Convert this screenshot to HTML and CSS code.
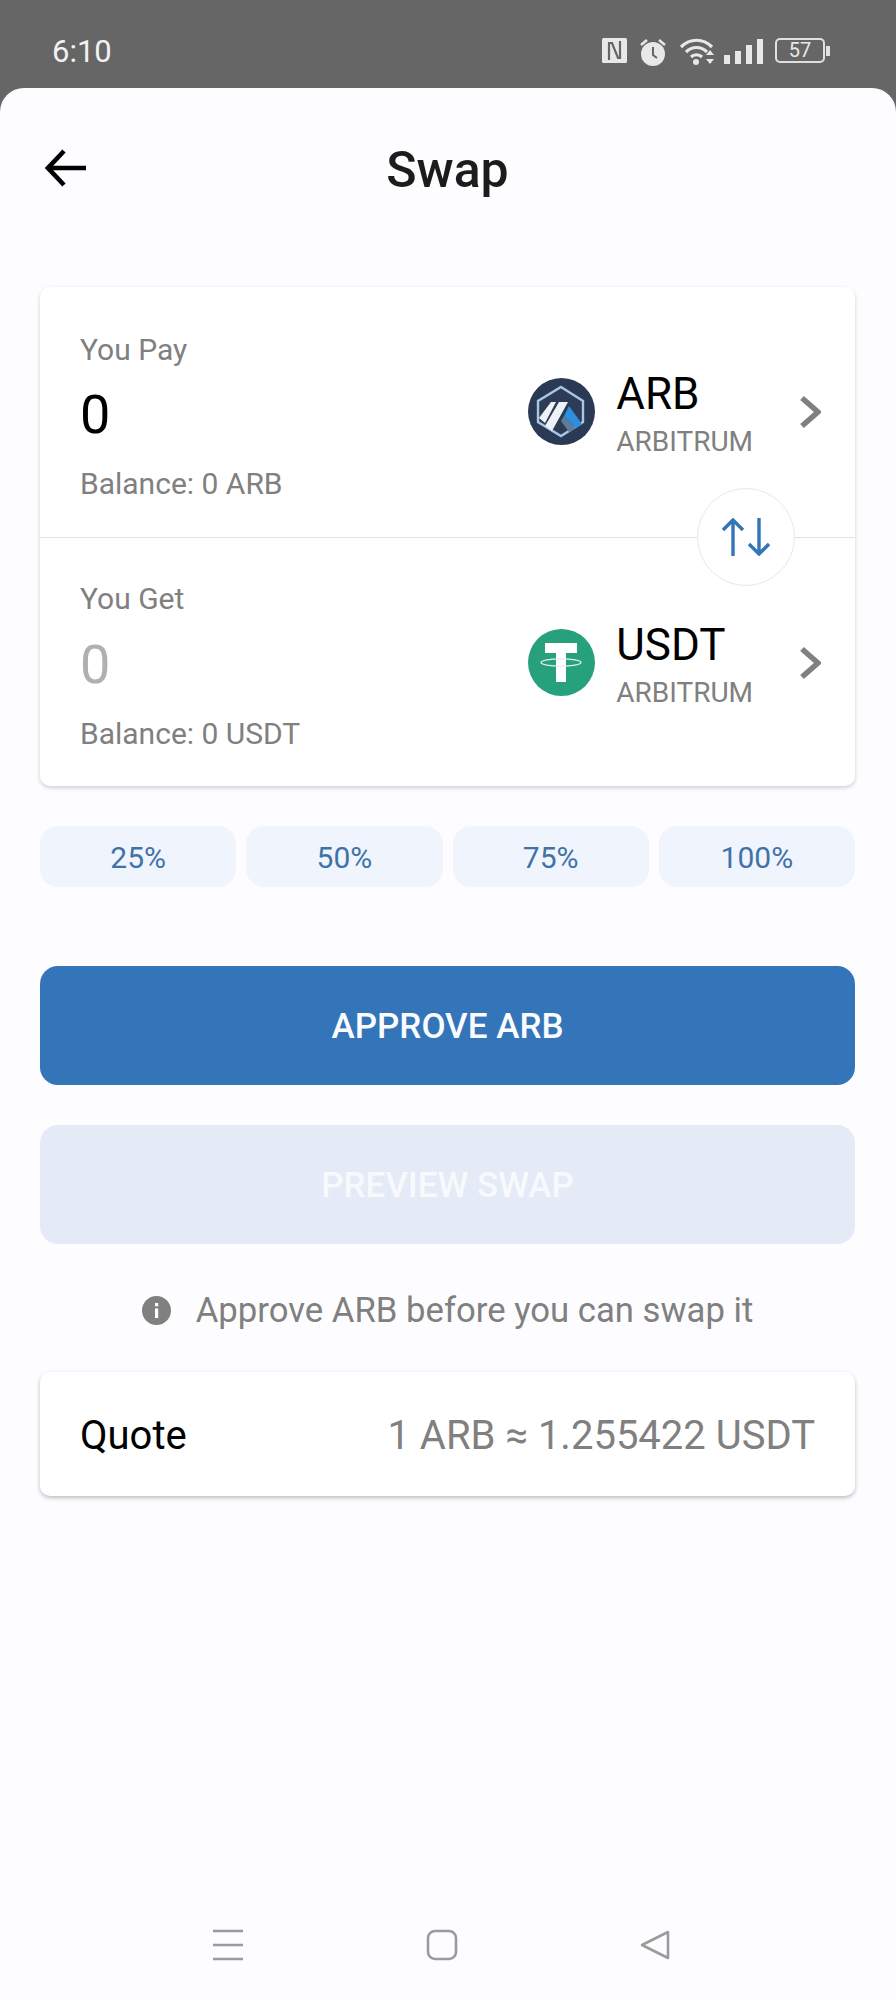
FILE: index.html
```html
<!DOCTYPE html>
<html lang="en">

<head>
  <meta charset="UTF-8">
  <meta name="viewport" content="width=device-width, initial-scale=1.0">
  <title>Swap</title>
  <link rel="stylesheet" href="styles.css">
</head>

<body>
  <div class="status">
    <span class="status__time">6:10</span>
    <div class="status__icons">
      <svg width="25" height="25" viewBox="0 0 25 25"><rect width="25" height="25" rx="1.500" fill="#e8e8e8"/><path d="M7 22V5h3l6 15h2V3" fill="none" stroke="#666" stroke-width="2.200"/></svg>
      <svg width="28" height="29" viewBox="0 0 28 29"><circle cx="14" cy="16" r="12" fill="#e8e8e8"/><path d="M14 9v8l4 3" fill="none" stroke="#666" stroke-width="2"/><path d="M2 7l6-5M26 7l-6-5" stroke="#e8e8e8" stroke-width="2.500"/></svg>
      <svg width="36" height="28" viewBox="0 0 36 28"><g fill="none" stroke="#e8e8e8" stroke-width="3.200"><path d="M2 9C11 0 24 0 33 9"/><path d="M7 14c6-6 15-6 21 0"/><path d="M12 19c3-3 8-3 11 0"/></g><circle cx="17" cy="24" r="3" fill="#e8e8e8"/><path d="M27 17l4-5 4 5zM27 21l4 5 4-5z" fill="#e8e8e8"/></svg>
      <div class="signal"><i class="s1"></i><i class="s2"></i><i class="s3"></i><i class="s4"></i></div>
      <div class="battery"><span class="battery__num">57</span></div>
    </div>
  </div>

  <div class="sheet">
    <div class="header">
      <svg class="header__back" width="41" height="38" viewBox="0 0 41 38"><path d="M19 2L3 19l16 17M3 19h38" fill="none" stroke="#000" stroke-width="4.600"/></svg>
      <h1 class="header__title">Swap</h1>
    </div>

    <div class="swap-card">
      <div class="swap-row">
        <div class="swap-row__left">
          <p class="swap-row__label">You Pay</p>
          <p class="swap-row__amount">0</p>
          <p class="swap-row__label swap-row__balance">Balance: 0 ARB</p>
        </div>
        <div class="token">
          <svg class="token__logo" viewBox="0 0 67 67">
            <circle cx="33.500" cy="33.500" r="33.500" fill="#2a3a54"/>
            <path d="M33 9l22 14v21L33 58 10 44V23z" fill="#2d3c55" stroke="#a9c6e4" stroke-width="2.400"/>
            <path d="M23 24h5L17 45l-6-5zM31 24h9L24 53l-7-5z" fill="#eef1f5"/>
            <path d="M36 38l-3 5 8 11 7-4z" fill="#5d7c9c"/>
            <path d="M41 28l13 18-6 4-12-12z" fill="#2d8fde"/>
          </svg>
          <div class="token__text">
            <span class="token__name">ARB</span>
            <span class="token__chain">ARBITRUM</span>
          </div>
          <svg class="token__arrow" width="22" height="34" viewBox="0 0 22 34"><path d="M3 3l16 14L3 31" fill="none" stroke="#808080" stroke-width="5.600"/></svg>
        </div>
      </div>

      <div class="swap-row swap-row--get">
        <div class="swap-row__left">
          <p class="swap-row__label">You Get</p>
          <p class="swap-row__amount swap-row__amount--empty">0</p>
          <p class="swap-row__label swap-row__balance">Balance: 0 USDT</p>
        </div>
        <div class="token token--get">
          <svg class="token__logo" viewBox="0 0 67 67">
            <circle cx="33.500" cy="33.500" r="33.500" fill="#26a17b"/>
            <path d="M17 14h32v10H38v29H28V24H17z" fill="#fff"/>
            <ellipse cx="33" cy="33.500" rx="20" ry="3.700" fill="none" stroke="#dff3ec" stroke-width="1.300"/>
          </svg>
          <div class="token__text">
            <span class="token__name">USDT</span>
            <span class="token__chain">ARBITRUM</span>
          </div>
          <svg class="token__arrow" width="22" height="34" viewBox="0 0 22 34"><path d="M3 3l16 14L3 31" fill="none" stroke="#808080" stroke-width="5.600"/></svg>
        </div>
      </div>

      <div class="swap-toggle">
        <svg width="48" height="38" viewBox="0 0 48 38"><path d="M11 38V2M1 12L11 2l10 10M37 0v36M27 26l10 10 10-10" fill="none" stroke="#3474b9" stroke-width="3.400"/></svg>
      </div>
    </div>

    <div class="percents">
      <button>25%</button>
      <button>50%</button>
      <button>75%</button>
      <button>100%</button>
    </div>

    <button class="btn btn--primary">APPROVE ARB</button>
    <button class="btn btn--disabled">PREVIEW SWAP</button>

    <div class="notice">
      <svg width="29" height="29" viewBox="0 0 29 29"><circle cx="14.500" cy="14.500" r="14.500" fill="#808080"/><path d="M13 12.500h3.200V22H13zM13 7h3.200v3.200H13z" fill="#fff"/></svg>
      <span>Approve ARB before you can swap it</span>
    </div>

    <div class="quote">
      <span class="quote__label">Quote</span>
      <span class="quote__value">1 ARB ≈ 1.255422 USDT</span>
    </div>

    <div class="nav">
      <svg width="32" height="32" viewBox="0 0 32 32"><path d="M1 2h30M1 16h30M1 30h30" stroke="#9b9b9b" stroke-width="2.400"/></svg>
      <svg width="32" height="32" viewBox="0 0 32 32"><rect x="2" y="2" width="28" height="28" rx="7" fill="none" stroke="#9b9b9b" stroke-width="2.600"/></svg>
      <svg width="32" height="32" viewBox="0 0 32 32"><path d="M29 3v26L3 16z" fill="none" stroke="#9b9b9b" stroke-width="2.600" stroke-linejoin="round"/></svg>
    </div>
  </div>
</body>

</html>
```

FILE: styles.css
```css
* {
  box-sizing: border-box;
}

html,
body {
  height: 100%;
}

body {
  margin: 0;
  background-color: #666;
  font-family: Roboto, "Liberation Sans", sans-serif;
  color: #000;
}

p,
h1 {
  margin: 0;
}

.status {
  display: flex;
  height: 88px;
  padding: 38px 71px 0 52px;
  justify-content: space-between;
  align-items: flex-start;
}

.status__time {
  color: #f2f2f2;
  font-size: 31px;
  line-height: 28px;
}

.status__icons {
  display: flex;
  align-items: flex-start;
  gap: 12px;
}

.signal {
  display: flex;
  align-items: flex-end;
  gap: 5px;
  height: 26px;
  margin-left: -3px;
}

.signal i {
  display: block;
  width: 6px;
  background-color: #e8e8e8;
}

.signal .s1 { height: 9px; }
.signal .s2 { height: 13px; }
.signal .s3 { height: 19px; }
.signal .s4 { height: 25px; }

.battery {
  position: relative;
  width: 50px;
  height: 25px;
  border: 2px solid #e0e0e0;
  border-radius: 5px;
  text-align: center;
}

.battery::after {
  content: "";
  position: absolute;
  right: -7px;
  top: 6px;
  width: 4px;
  height: 10px;
  background-color: #e0e0e0;
}

.battery__num {
  display: block;
  color: #e8e8e8;
  font-size: 20px;
  line-height: 21px;
}

.sheet {
  display: flex;
  flex-direction: column;
  height: 1911px;
  padding: 0 41px 0 40px;
  background-color: #fdfdff;
  border-radius: 24px 24px 0 0;
}

.header {
  position: relative;
  display: flex;
  height: 199px;
  padding-top: 50px;
  justify-content: center;
}

.header__back {
  position: absolute;
  left: 5px;
  top: 61px;
}

.header__title {
  font-size: 50px;
  font-weight: 500;
  line-height: 64px;
  color: #1c1c1c;
}

.swap-card {
  position: relative;
  background-color: #fff;
  border-radius: 10px;
  box-shadow: 0 2px 4px rgba(0, 0, 0, .18);
}

.swap-row {
  display: flex;
  height: 250px;
  padding: 45px 34px 0 40px;
  justify-content: space-between;
}

.swap-row--get {
  height: 249px;
  padding-top: 43px;
  border-top: 1px solid #e2e2e6;
}

.swap-row__label {
  font-size: 30px;
  line-height: 36px;
  color: #808080;
}

.swap-row__amount {
  margin-top: 16px;
  font-size: 54px;
  line-height: 62px;
}

.swap-row__amount--empty {
  margin-top: 17px;
  color: #b0b0b0;
}

.swap-row__balance {
  margin-top: 20px;
}

.token {
  display: flex;
  height: 128px;
  padding-top: 36px;
  align-items: center;
}

.token--get {
  height: 130px;
  padding-top: 38px;
}

.token__logo {
  width: 67px;
  height: 67px;
  margin-top: -5px;
}

.token__text {
  display: flex;
  flex-direction: column;
  margin-left: 21px;
}

.token__name {
  font-size: 44px;
  line-height: 52px;
}

.token__chain {
  margin-top: 4px;
  font-size: 28px;
  line-height: 36px;
  color: #808080;
}

.token__arrow {
  margin-left: 46px;
  margin-top: -5px;
}

.swap-toggle {
  position: absolute;
  left: 657px;
  top: 201px;
  display: flex;
  width: 98px;
  height: 98px;
  align-items: center;
  justify-content: center;
  background-color: #fff;
  border: 1px solid #e8e8ea;
  border-radius: 50%;
}

.percents {
  display: grid;
  grid-template-columns: repeat(4, 1fr);
  gap: 10px;
  margin-top: 40px;
}

.percents button {
  height: 61px;
  padding-top: 2px;
  border: none;
  border-radius: 18px;
  background-color: #f0f4fc;
  color: #3f73a8;
  font-family: inherit;
  font-size: 30px;
}

.btn {
  height: 119px;
  padding-top: 3px;
  border: none;
  border-radius: 18px;
  font-family: inherit;
  font-size: 35px;
  font-weight: 500;
}

.btn--primary {
  margin-top: 79px;
  background-color: #3474b9;
  color: #fafcff;
}

.btn--disabled {
  margin-top: 40px;
  background-color: #e4eaf6;
  color: #f8f9fd;
}

.notice {
  display: flex;
  margin-top: 48px;
  height: 36px;
  align-items: center;
  justify-content: center;
  gap: 25px;
  font-size: 34.7px;
  color: #808080;
}

.quote {
  display: flex;
  height: 124px;
  margin-top: 44px;
  padding: 2px 40px 0;
  align-items: center;
  justify-content: space-between;
  background-color: #fff;
  border-radius: 10px;
  box-shadow: 0 2px 4px rgba(0, 0, 0, .25);
  font-size: 40px;
}

.quote__value {
  color: #808080;
}

.nav {
  display: flex;
  margin-top: auto;
  padding: 0 184px 38px 172px;
  justify-content: space-between;
}
```
